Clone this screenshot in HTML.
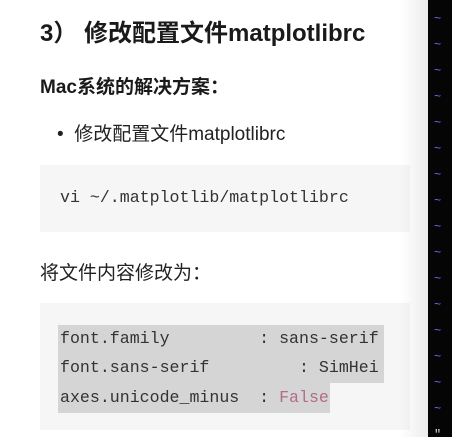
<!DOCTYPE html>
<html><head><meta charset="utf-8"><style>
body{margin:0;width:452px;height:437px;overflow:hidden;background:#fff;position:relative;font-family:"Liberation Sans","Noto Sans CJK SC",sans-serif;color:#222}
.a{position:absolute;white-space:pre}
.mono{font-family:"Liberation Mono","DejaVu Sans Mono",monospace;font-size:16.6px;color:#333}
.shade{position:absolute;left:400px;top:0;width:30px;height:437px;background:linear-gradient(90deg,rgba(0,0,0,0),rgba(0,0,0,.08))}
.strip{position:absolute;left:428px;top:0;width:24px;height:437px;background:#050505}
.t{position:absolute;left:434px;color:#6b6bff;font-size:12px;font-family:"Liberation Mono",monospace}
</style></head><body>
<div class="a" style="left:40px;top:13px;font-size:24px;font-weight:bold;color:#1a1a1a">3） 修改配置文件matplotlibrc</div>
<div class="a" style="left:40px;top:72px;font-size:19px;font-weight:bold;color:#1a1a1a">Mac系统的解决方案：</div>
<div class="a" style="left:57px;top:119px;font-size:19px">•&nbsp;&nbsp;修改配置文件matplotlibrc</div>
<div style="position:absolute;left:40px;top:165px;width:370px;height:67px;background:#f6f6f6"></div>
<div class="a mono" style="left:60px;top:188px">vi ~/.matplotlib/matplotlibrc</div>
<div class="a" style="left:40px;top:258px;font-size:19px">将文件内容修改为：</div>
<div style="position:absolute;left:40px;top:303px;width:370px;height:127px;background:#f6f6f6"></div>
<div style="position:absolute;left:58px;top:325px;width:326px;height:58px;background:#d5d5d5"></div>
<div style="position:absolute;left:58px;top:383px;width:272px;height:30px;background:#d5d5d5"></div>
<div class="a mono" style="left:60px;top:329px">font.family         : sans-serif</div>
<div class="a mono" style="left:60px;top:358px">font.sans-serif         : SimHei</div>
<div class="a mono" style="left:60px;top:388px">axes.unicode_minus  : <span style="color:#b46a8a">False</span></div>
<div class="shade"></div>
<div class="strip"></div>
<div class="t" style="top:12px">~</div><div class="t" style="top:38px">~</div><div class="t" style="top:64px">~</div><div class="t" style="top:90px">~</div><div class="t" style="top:116px">~</div><div class="t" style="top:142px">~</div><div class="t" style="top:168px">~</div><div class="t" style="top:194px">~</div><div class="t" style="top:220px">~</div><div class="t" style="top:246px">~</div><div class="t" style="top:272px">~</div><div class="t" style="top:298px">~</div><div class="t" style="top:324px">~</div><div class="t" style="top:350px">~</div><div class="t" style="top:376px">~</div><div class="t" style="top:402px">~</div>
<div class="t" style="top:428px;color:#ddd">"</div>
</body></html>
